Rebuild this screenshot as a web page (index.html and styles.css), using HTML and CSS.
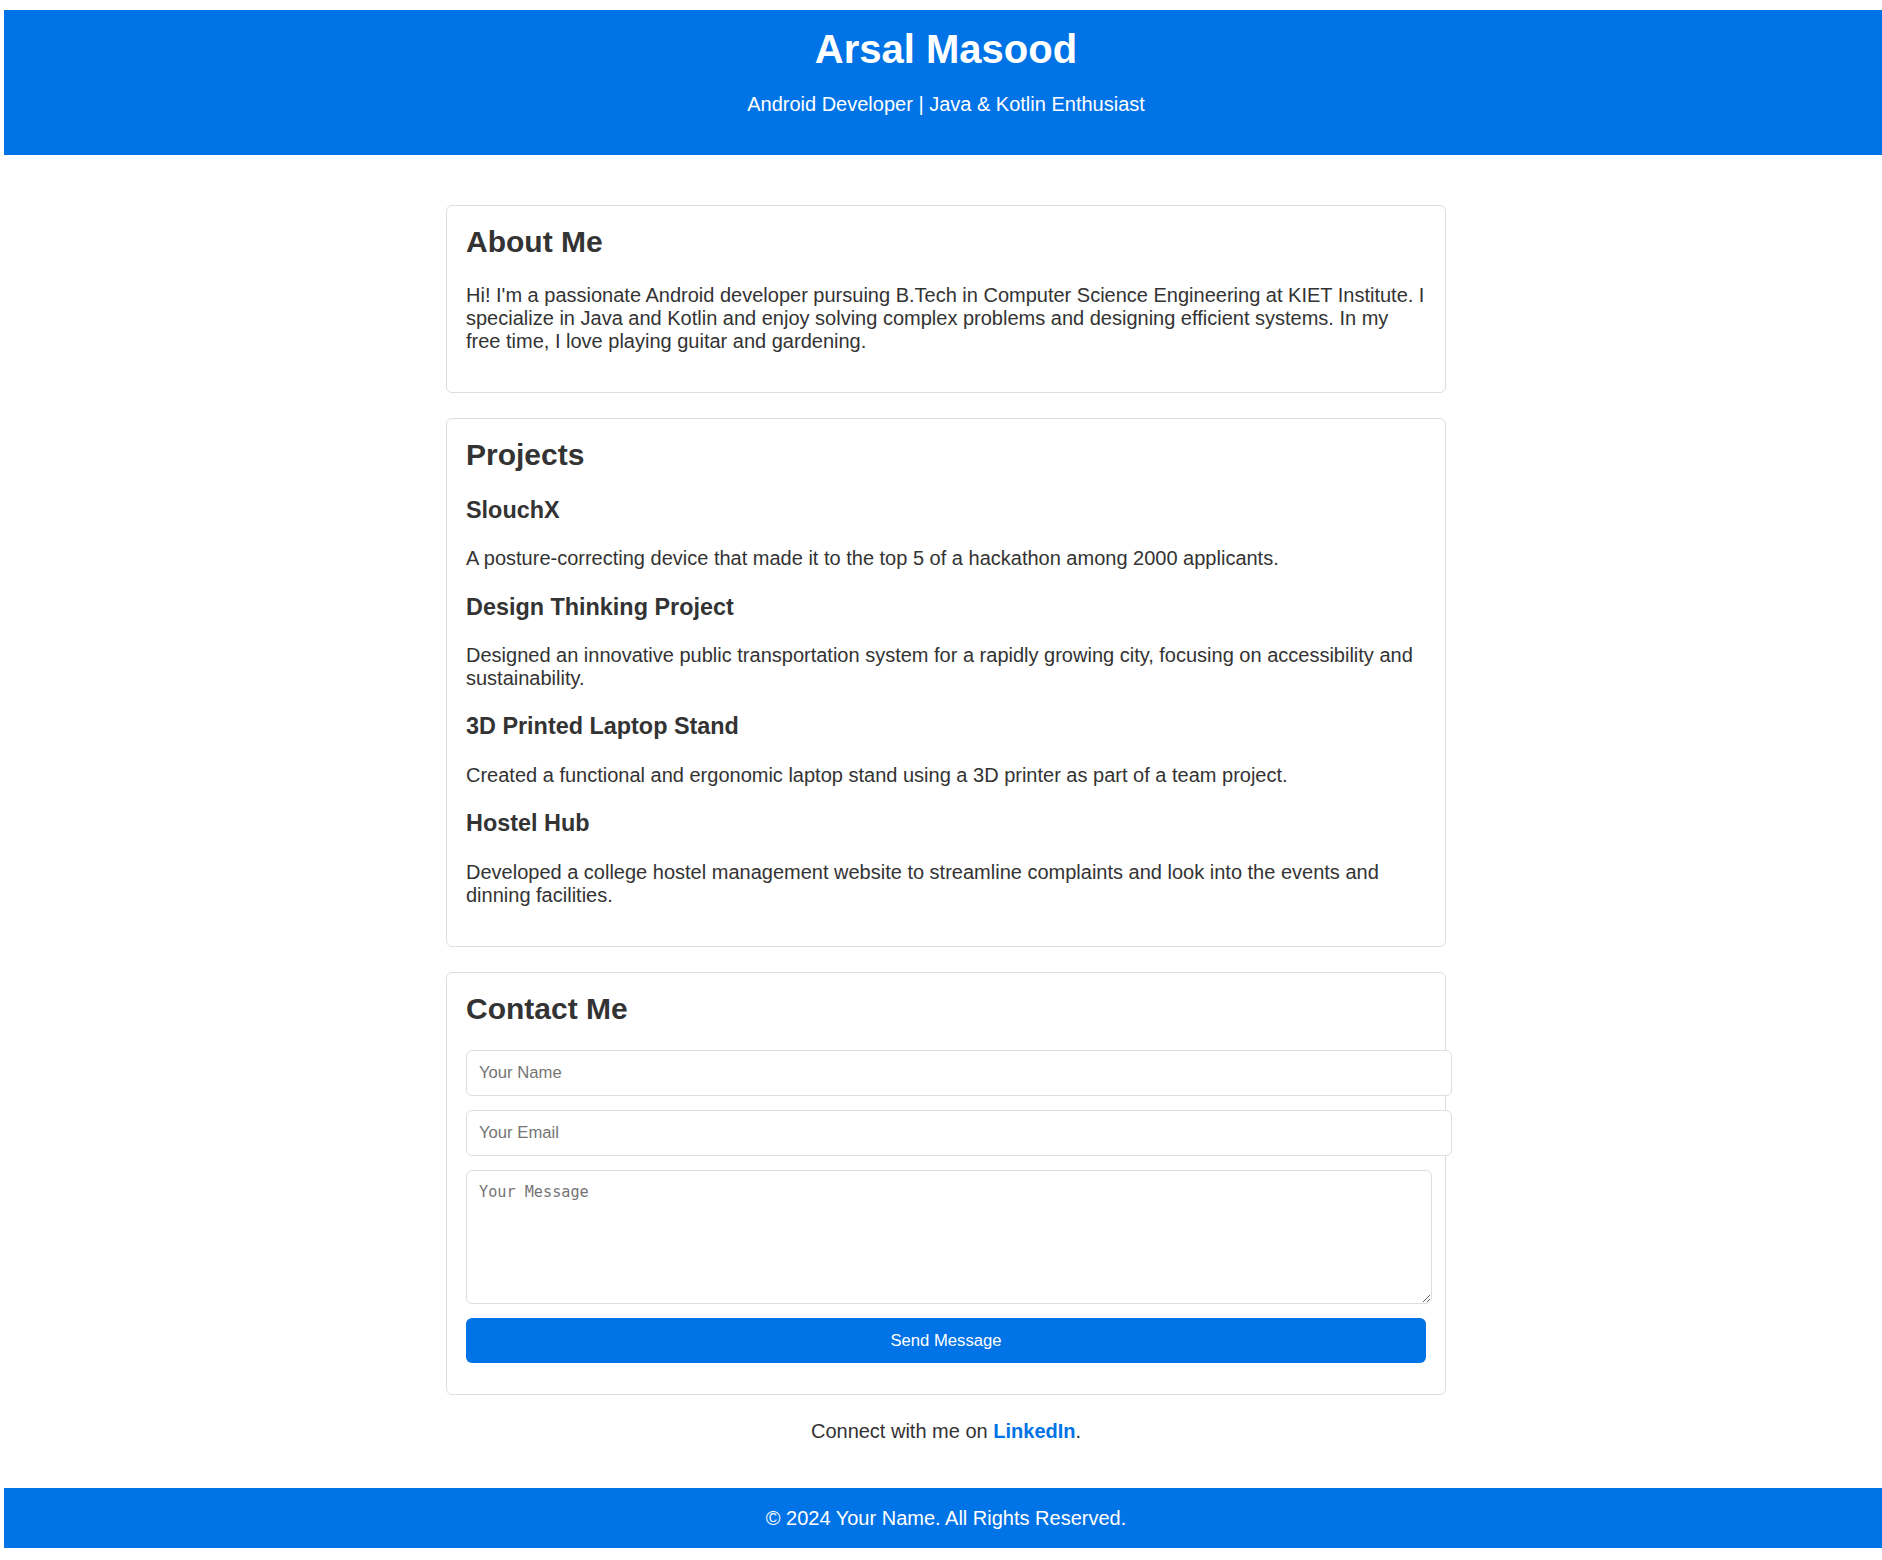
FILE: index.html
```html
<!DOCTYPE html>
<html lang="en">
<head>
<meta charset="UTF-8">
<title>Arsal Masood</title>
<link rel="stylesheet" href="styles.css">
</head>
<body>
<header class="site-header">
  <h1 class="site-title">Arsal Masood</h1>
  <p class="site-tagline">Android Developer | Java &amp; Kotlin Enthusiast</p>
</header>

<main class="content">
  <section class="card">
    <h2 class="card-title">About Me</h2>
    <p class="text">Hi! I'm a passionate Android developer pursuing B.Tech in Computer Science Engineering at KIET Institute. I specialize in Java and Kotlin and enjoy solving complex problems and designing efficient systems. In my free time, I love playing guitar and gardening.</p>
  </section>

  <section class="card">
    <h2 class="card-title">Projects</h2>
    <h3 class="project-title">SlouchX</h3>
    <p class="text">A posture-correcting device that made it to the top 5 of a hackathon among 2000 applicants.</p>
    <h3 class="project-title">Design Thinking Project</h3>
    <p class="text">Designed an innovative public transportation system for a rapidly growing city, focusing on accessibility and sustainability.</p>
    <h3 class="project-title">3D Printed Laptop Stand</h3>
    <p class="text">Created a functional and ergonomic laptop stand using a 3D printer as part of a team project.</p>
    <h3 class="project-title">Hostel Hub</h3>
    <p class="text">Developed a college hostel management website to streamline complaints and look into the events and dinning facilities.</p>
  </section>

  <section class="card card-contact">
    <h2 class="card-title">Contact Me</h2>
    <form class="contact-form">
      <input class="field" type="text" placeholder="Your Name">
      <input class="field" type="email" placeholder="Your Email">
      <textarea class="field-area" placeholder="Your Message"></textarea>
      <button class="send-btn" type="button">Send Message</button>
    </form>
  </section>

  <p class="connect">Connect with me on <a class="connect-link" href="#">LinkedIn</a>.</p>
</main>

<footer class="site-footer">
  <p class="footer-text">&copy; 2024 Your Name. All Rights Reserved.</p>
</footer>
</body>
</html>
```

FILE: styles.css
```css
html {
  overflow: hidden;
}

body {
  margin: 10px 0 0 4px;
  width: 1884px;
  font-family: "Liberation Sans", Arial, sans-serif;
  font-size: 20px;
  color: #333;
  background: #fff;
}

.site-header {
  background: #0073e6;
  color: #fff;
  text-align: center;
  padding: 17px 20px 19px;
}

.site-title {
  margin: 0;
  font-size: 40px;
  font-weight: bold;
}

.site-tagline {
  margin: 21px 0 20px;
  font-size: 20px;
}

.content {
  padding: 25px 0;
}

.card {
  box-sizing: border-box;
  width: 1000px;
  margin: 25px auto;
  padding: 19px;
  border: 1px solid #ddd;
  border-radius: 6px;
  background: #fff;
}

.card-title {
  margin: 0 0 24.9px;
  font-size: 30px;
  font-weight: bold;
}

.project-title {
  margin: 23.4px 0;
  font-size: 23.4px;
  font-weight: bold;
}

.text {
  margin: 20px 0;
}

.contact-form {
  padding-bottom: 12px;
}

.field {
  display: block;
  width: 100%;
  margin: 0 0 14px;
  padding: 12px;
  border: 1px solid #ddd;
  border-radius: 6px;
  font-family: "Liberation Sans", Arial, sans-serif;
  font-size: 16.67px;
  color: #333;
  background: #fff;
}

.field::placeholder,
.field-area::placeholder {
  color: #757575;
}

.field-area {
  display: block;
  box-sizing: border-box;
  width: 966px;
  height: 134px;
  margin: 0 0 14px;
  padding: 12px;
  border: 1px solid #ddd;
  border-radius: 6px;
  font-family: "DejaVu Sans Mono", monospace;
  font-size: 15.2px;
  color: #333;
}

.send-btn {
  display: block;
  width: 100%;
  padding: 12.5px;
  border: none;
  border-radius: 6px;
  background: #0073e6;
  color: #fff;
  font-family: "Liberation Sans", Arial, sans-serif;
  font-size: 16.67px;
  cursor: pointer;
}

.connect {
  margin: 20px 0;
  text-align: center;
}

.connect-link {
  color: #0073e6;
  font-weight: bold;
  text-decoration: none;
}

.site-footer {
  background: #0073e6;
  color: #fff;
  text-align: center;
  padding: 18.5px 0;
}

.footer-text {
  margin: 0;
}
```
